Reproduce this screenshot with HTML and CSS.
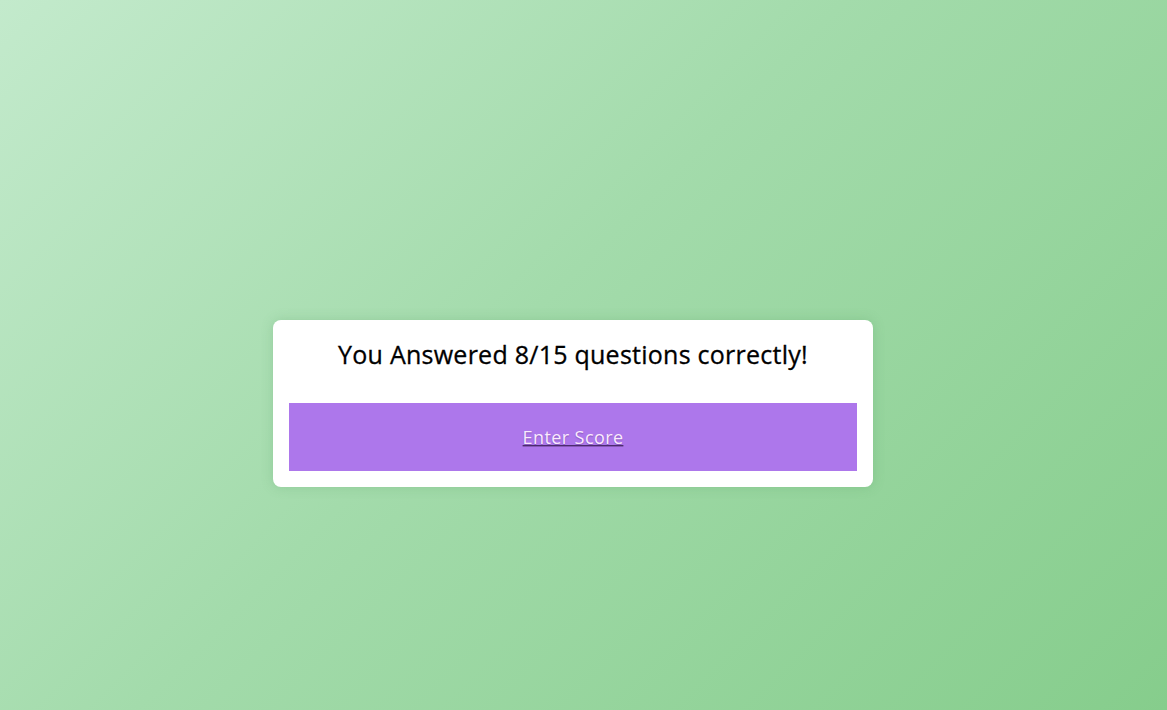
FILE: index.html
```html
<!DOCTYPE html>
<html lang="en">
<head>
<meta charset="utf-8">
<title>Quiz Result</title>
<link rel="stylesheet" href="styles.css">
</head>
<body>
<main class="stage">
  <section class="card">
    <h2 class="result">You Answered 8/15 questions correctly!</h2>
    <div class="action">
      <a class="enter" href="#">Enter Score</a>
    </div>
  </section>
</main>
</body>
</html>
```
FILE: styles.css
```css
html, body {
  margin: 0;
  height: 100%;
}
body {
  background: linear-gradient(135deg, #c3eacc 0%, #a3dbab 45%, #86cd8c 100%);
  font-family: "Open Sans", "Noto Sans", sans-serif;
}
.stage {
  display: flex;
  justify-content: center;
  padding: 320px 21px 0 0;
}
.card {
  width: 600px;
  box-sizing: border-box;
  background: #fff;
  border-radius: 8px;
  padding: 16px 16px 16px;
  box-shadow: 0 0 12px rgba(80, 150, 90, 0.25);
}
.result {
  margin: 0;
  height: 67px;
  text-align: center;
  font-size: 25px;
  font-weight: 500;
  line-height: 36px;
  color: #000;
  letter-spacing: 0.25px;
  -webkit-text-stroke: 0.3px #000;
}
.action {
  background: #ad77eb;
  height: 68px;
  display: flex;
  align-items: center;
  justify-content: center;
}
.enter {
  color: #fbeaff;
  font-size: 18px;
  font-weight: 500;
  text-decoration: underline;
  text-decoration-color: #4a2c6e;
  text-shadow: 0 1px 1px rgba(60, 30, 90, 0.35);
  letter-spacing: 0.4px;
}
```
